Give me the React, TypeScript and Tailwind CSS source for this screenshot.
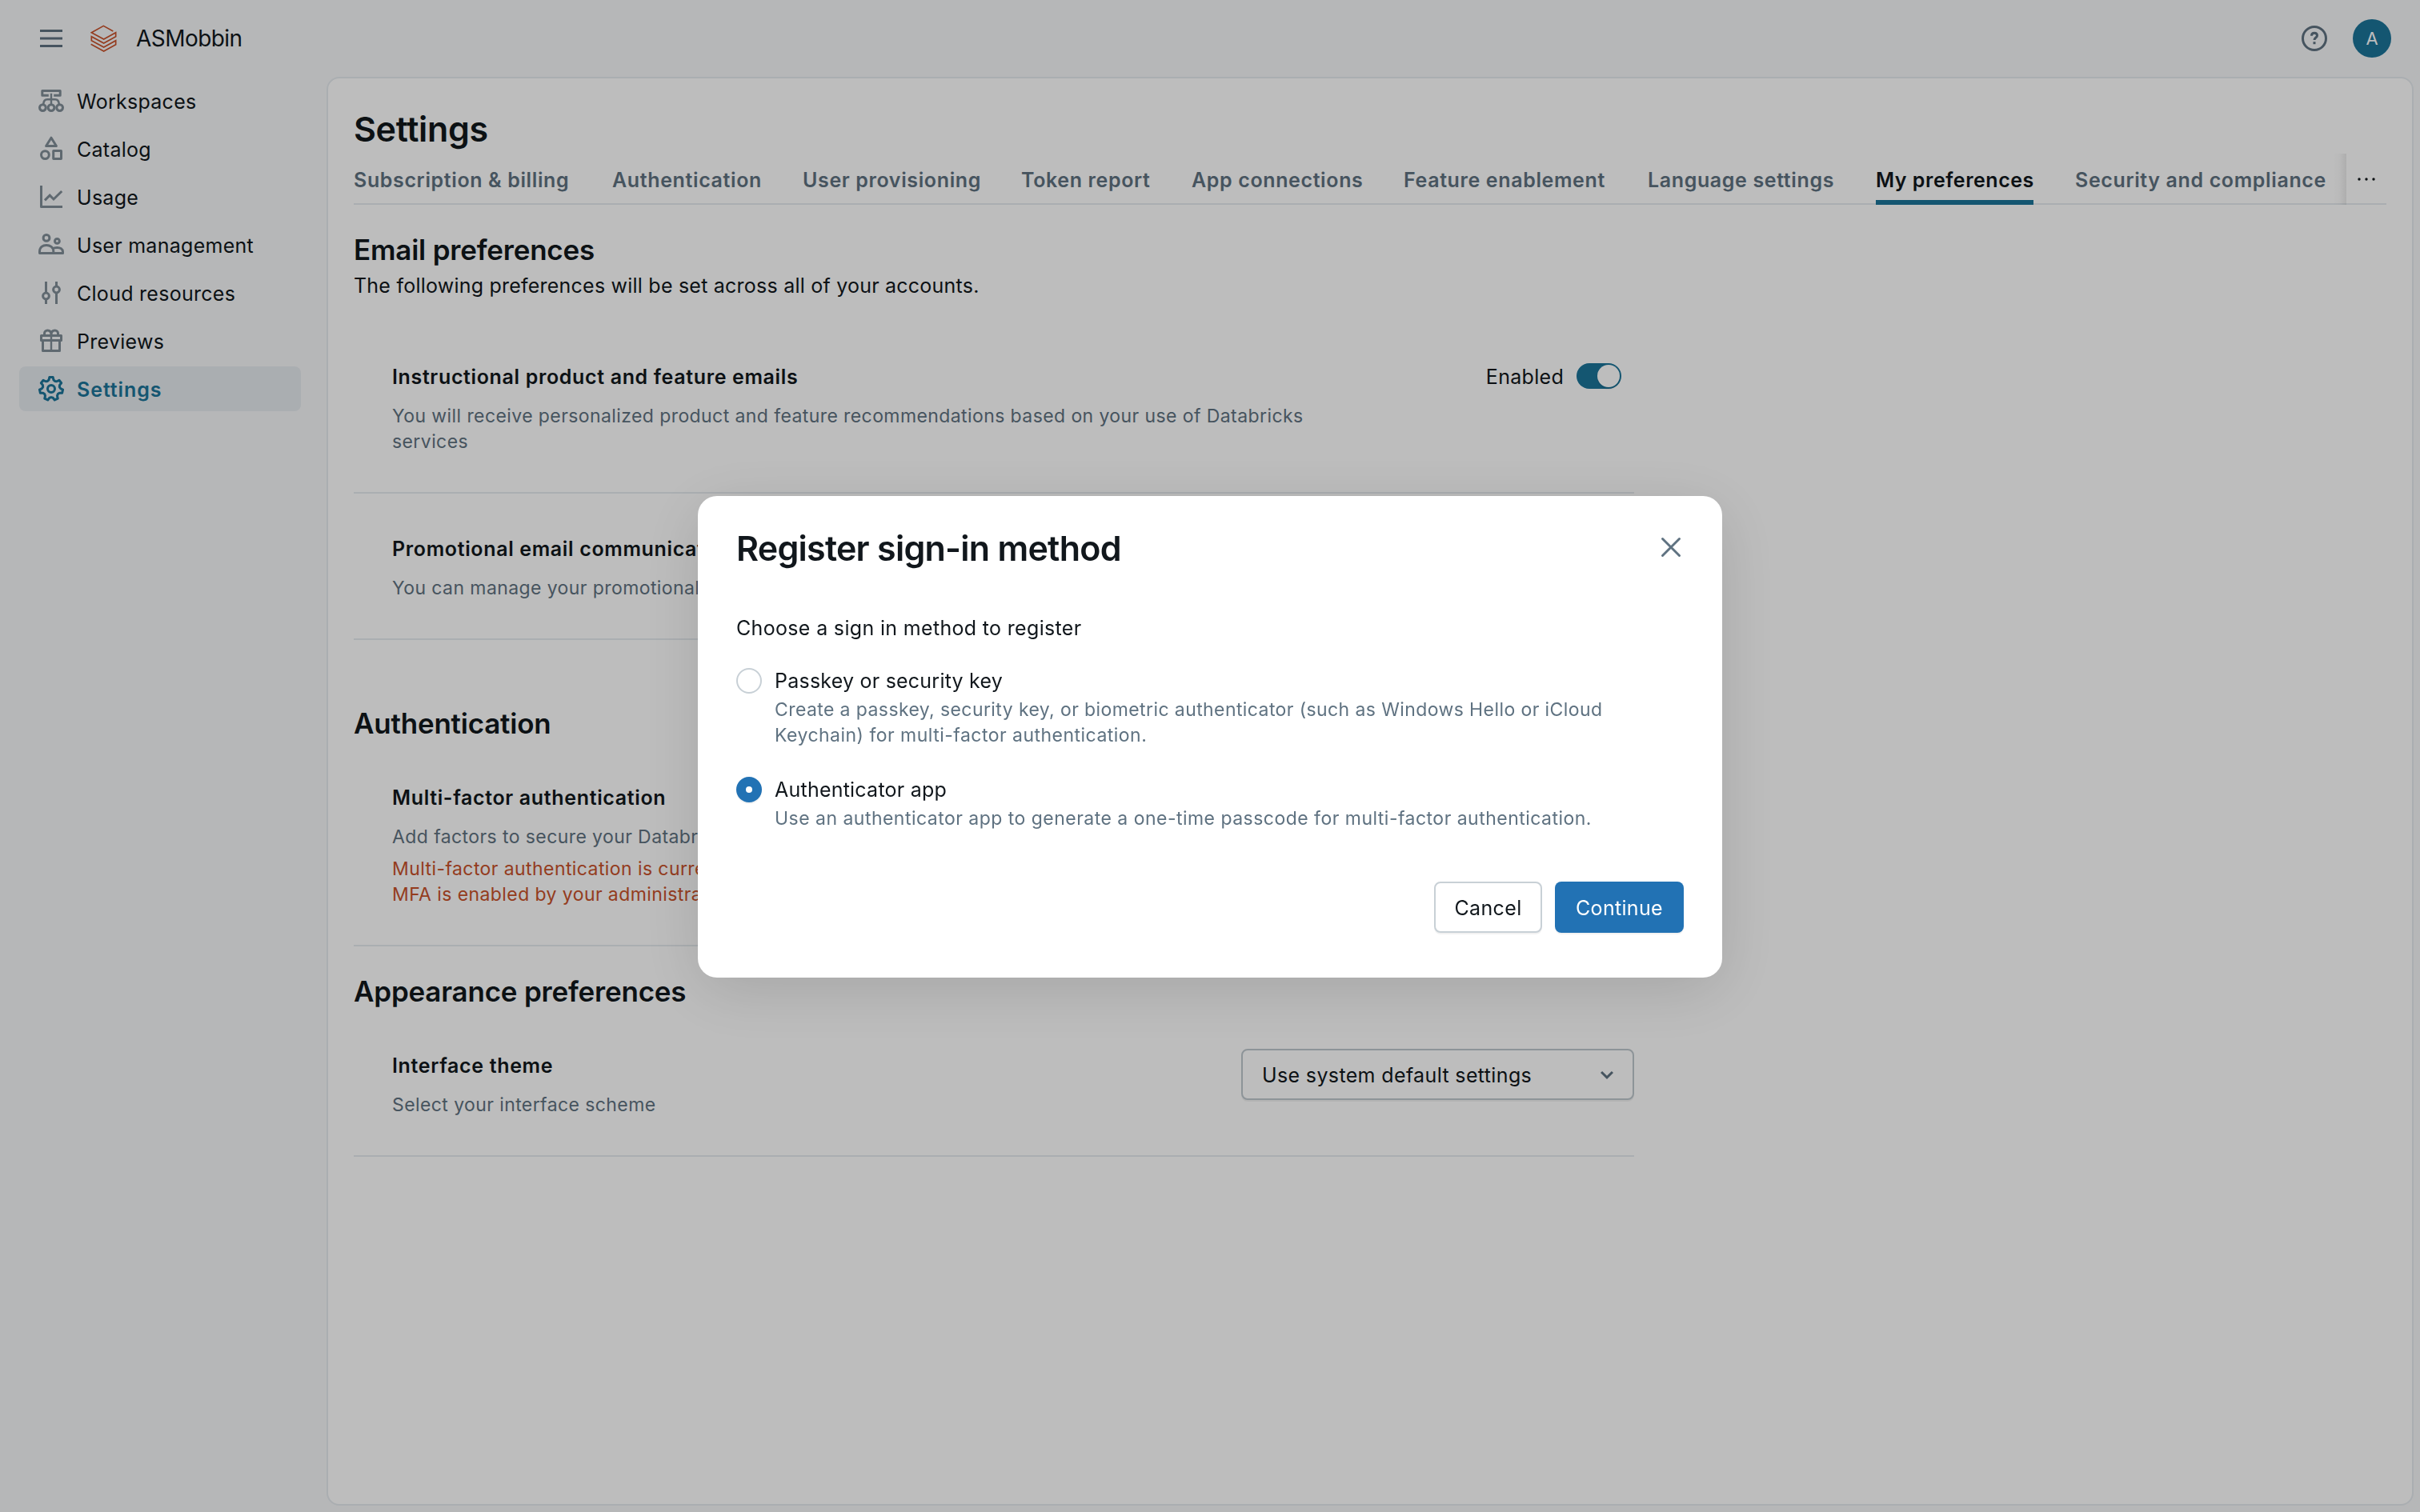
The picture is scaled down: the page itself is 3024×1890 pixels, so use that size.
import type { ReactNode } from "react";

interface IconProps {
  className?: string;
}

interface StrokeIconProps extends IconProps {
  children: ReactNode;
}

function StrokeIcon({ className = "", children }: StrokeIconProps) {
  return (
    <svg
      viewBox="0 0 16 16"
      fill="none"
      stroke="currentColor"
      strokeWidth="1.5"
      className={`size-8 shrink-0 ${className}`}
    >
      {children}
    </svg>
  );
}

function MenuIcon() {
  return (
    <StrokeIcon className="text-[#5f7281]">
      <path d="M1 3.25h14M1 8h14M1 12.75h14" />
    </StrokeIcon>
  );
}

function LogoIcon() {
  return (
    <svg
      viewBox="341 93 99 102"
      fill="none"
      stroke="#c8522b"
      strokeWidth="5"
      className="h-[34px] w-[33px] shrink-0"
    >
      <path d="M426 117 390 97l-45 25 46 25 45-25v15l-45 25-46-25v15l46 25 45-25v15l-45 25-48-26" />
    </svg>
  );
}

function WorkspacesIcon() {
  return (
    <StrokeIcon>
      <path d="M6.4 4.6H2.4V1.75h11.2V4.6h-4" strokeLinejoin="round" />
      <path d="M8 3.4v6.8" strokeWidth="1.2" />
      <path d="M3.1 10.2C3.2 8.2 4.2 7.1 5.6 7.1h4.8c1.4 0 2.4 1.1 2.5 3.1" strokeWidth="1.3" />
      <circle cx="2.7" cy="12.3" r="1.95" />
      <circle cx="8" cy="12.3" r="1.95" />
      <circle cx="13.3" cy="12.3" r="1.95" />
    </StrokeIcon>
  );
}

function CatalogIcon() {
  return (
    <StrokeIcon>
      <path d="M8 1.1 11.2 6.25H4.8z" strokeLinejoin="round" />
      <circle cx="4.2" cy="11.8" r="2.45" />
      <rect x="9.35" y="9.3" width="4.9" height="4.9" rx="0.1" strokeLinejoin="round" />
    </StrokeIcon>
  );
}

function UsageIcon() {
  return (
    <StrokeIcon>
      <path d="M1.75 1v13.25H15" strokeLinejoin="round" />
      <path d="m4 10.2 3.1-3.1 2.4 2.4 5.1-5" />
    </StrokeIcon>
  );
}

function UsersIcon() {
  return (
    <StrokeIcon>
      <circle cx="5" cy="3.7" r="1.95" />
      <circle cx="11.7" cy="5.7" r="1.45" />
      <path
        d="M.75 13.25v-1C.75 9.6 2.7 8.2 5 8.2s4.4 1.4 4.4 4v1z"
        strokeLinejoin="round"
      />
      <path
        d="M9.4 13.25h5.85v-.9c0-1.8-1.6-2.65-3.5-2.65-1.2 0-2.1.2-2.9.7"
        strokeLinejoin="round"
      />
    </StrokeIcon>
  );
}

function SlidersIcon() {
  return (
    <StrokeIcon>
      <path d="M4.75 1v7M4.75 12v3M11.25 1v3M11.25 8v7" />
      <circle cx="4.75" cy="10" r="1.95" />
      <circle cx="11.25" cy="6" r="1.95" />
    </StrokeIcon>
  );
}

function GiftIcon() {
  return (
    <StrokeIcon>
      <path d="M1.75 4.75h12.5v3H1.75zM2.75 7.75h10.5v6.5H2.75z" strokeLinejoin="round" />
      <path d="M8 4.75v9.5" strokeWidth="1.2" />
      <path d="M3.75 4.5V3.4a1.9 1.9 0 0 1 1.9-1.9C7 1.5 8 2.5 8 4.3c0-1.8 1-2.8 2.35-2.8a1.9 1.9 0 0 1 1.9 1.9v1.1" />
    </StrokeIcon>
  );
}

// seven teeth, first one pointing straight up
function gearPath(): string {
  const points: string[] = [];
  const add = (angle: number, radius: number) =>
    points.push(
      `${(8 + radius * Math.sin(angle)).toFixed(2)} ${(8 - radius * Math.cos(angle)).toFixed(2)}`
    );
  for (let i = 0; i < 7; i++) {
    const a = (i * 2 * Math.PI) / 7;
    add(a - 0.26, 5.75);
    add(a - 0.15, 7.3);
    add(a + 0.15, 7.3);
    add(a + 0.26, 5.75);
    add(a + Math.PI / 7, 5.3);
  }
  return `M${points.join("L")}Z`;
}

function GearIcon() {
  return (
    <StrokeIcon>
      <path d={gearPath()} strokeLinejoin="round" />
      <circle cx="8" cy="8" r="2.25" />
    </StrokeIcon>
  );
}

function HelpIcon() {
  return (
    <StrokeIcon className="text-[#5f7281]">
      <circle cx="8" cy="8" r="7.25" />
      <path d="M6.25 6.4c0-1.1.75-1.8 1.75-1.8s1.75.65 1.75 1.6c0 1.3-1.75 1.3-1.75 2.75" />
      <path d="M8 10.1v1.5" />
    </StrokeIcon>
  );
}

const navItems = [
  { label: "Workspaces", icon: WorkspacesIcon },
  { label: "Catalog", icon: CatalogIcon },
  { label: "Usage", icon: UsageIcon },
  { label: "User management", icon: UsersIcon },
  { label: "Cloud resources", icon: SlidersIcon },
  { label: "Previews", icon: GiftIcon },
  { label: "Settings", icon: GearIcon, active: true },
];

const tabs = [
  { label: "Subscription & billing", width: "w-[271px]" },
  { label: "Authentication", width: "w-[186px]" },
  { label: "User provisioning", width: "w-[221px]" },
  { label: "Token report", width: "w-[161px]" },
  { label: "App connections", width: "w-[213px]" },
  { label: "Feature enablement", width: "w-[253px]" },
  { label: "Language settings", width: "w-[233px]" },
  { label: "My preferences", width: "w-[197px]", active: true },
  { label: "Security and compliance", width: "w-[312px]" },
];

function Header() {
  return (
    <header className="flex h-24 shrink-0 items-center pl-12 pr-9">
      <MenuIcon />
      <div className="ml-[33px] flex items-center gap-6">
        <LogoIcon />
        <span className="text-[28px] leading-10 tracking-[-0.02em]">ASMobbin</span>
      </div>
      <div className="ml-auto flex items-center gap-8">
        <HelpIcon />
        <div className="flex size-12 items-center justify-center rounded-full bg-[#1b7499] pt-px text-[22px] text-white">
          A
        </div>
      </div>
    </header>
  );
}

function Sidebar() {
  return (
    <nav className="flex w-[408px] shrink-0 flex-col gap-1 pl-6 pr-8 pt-0.5">
      {navItems.map(({ label, icon: Icon, active }) => (
        <div
          key={label}
          className={
            active
              ? "flex h-14 items-center gap-4 rounded-lg bg-[#e6ebef] pl-6 font-semibold text-[#1b7499]"
              : "flex h-14 items-center gap-4 pl-6"
          }
        >
          <span className={active ? "text-[#1b7499]" : "text-[#808e98]"}>
            <Icon />
          </span>
          <span
            className={
              active
                ? "pt-0.5 text-[25px] leading-10 tracking-[0.037em]"
                : "pt-0.5 text-[25px] leading-10 tracking-[0.011em]"
            }
          >
            {label}
          </span>
        </div>
      ))}
    </nav>
  );
}

function TabBar() {
  return (
    <div className="mt-[3px] flex h-16 shadow-[inset_0_-2px_0_#e6ebef]">
      <div className="flex gap-[52px]">
        {tabs.map((tab) => (
          <div
            key={tab.label}
            className={
              tab.active
                ? `${tab.width} whitespace-nowrap border-b-6 border-[#1b7499] pt-[13px] text-[25px] font-semibold leading-10 tracking-[0.021em]`
                : `${tab.width} whitespace-nowrap pt-[13px] text-[25px] font-semibold leading-10 tracking-[0.025em] text-[#5f7281]`
            }
          >
            {tab.label}
          </div>
        ))}
      </div>
      <div className="ml-auto w-4 bg-linear-to-r from-transparent via-black/2 to-black/8" />
      <div className="flex w-[50px] items-center justify-center">
        <svg viewBox="0 0 22 4" fill="currentColor" className="h-1 w-[22px]">
          <circle cx="2" cy="2" r="1.7" />
          <circle cx="11" cy="2" r="1.7" />
          <circle cx="20" cy="2" r="1.7" />
        </svg>
      </div>
    </div>
  );
}

interface SectionTitleProps {
  children: ReactNode;
  className: string;
}

function SectionTitle({ children, className }: SectionTitleProps) {
  return (
    <h2 className={`text-[35px] font-semibold leading-[48px] tracking-[-0.006em] ${className}`}>
      {children}
    </h2>
  );
}

interface PreferenceRowProps {
  title: string;
  description: string;
  warning?: ReactNode;
  control?: ReactNode;
  className?: string;
}

function PreferenceRow({ title, description, warning, control, className = "" }: PreferenceRowProps) {
  return (
    <div
      className={`flex w-[1600px] items-start justify-between border-b-2 border-[#e6ebef] pb-[47px] pl-12 pt-[49px] ${className}`}
    >
      <div className="-mr-40 w-[1200px] shrink-0">
        <h3 className="text-[25px] font-semibold leading-10 tracking-[0.0258em]">{title}</h3>
        <p className="mt-[13px] max-w-[1160px] text-[23px] leading-8 tracking-[0.0178em] text-[#5f7281]">
          {description}
        </p>
        {warning && (
          <p className="mt-2 text-[23px] leading-8 tracking-[0.018em] text-[#c8522b]">{warning}</p>
        )}
      </div>
      {control}
    </div>
  );
}

function EnabledToggle() {
  return (
    <div className="mr-4 flex h-10 items-center gap-4">
      <span className="text-[25px] leading-10 tracking-[0.012em]">Enabled</span>
      <div className="mb-0.5 flex h-8 w-14 items-center justify-end rounded-full bg-[#1b7499] pr-0.5">
        <div className="size-7 rounded-full bg-white shadow-[0_3px_1px_rgba(0,0,0,0.06)]" />
      </div>
    </div>
  );
}

function ThemeSelect() {
  return (
    <div className="-mb-4 -mt-px flex h-16 w-[491px] items-center justify-between rounded-lg border-2 border-[#bfc8ce] bg-white pl-6 pr-4 shadow-[0_2px_0_rgba(0,0,0,0.05)]">
      <span className="pt-0.5 text-[25px] leading-10 tracking-[0.0145em]">
        Use system default settings
      </span>
      <svg viewBox="0 0 16 16" className="size-8 fill-[#5f7281]">
        <path d="M8 8.917 10.947 6 12 7.042 8 11 4 7.042 5.053 6z" />
      </svg>
    </div>
  );
}

function SettingsPanel() {
  return (
    <main className="mb-2 mr-2 flex-1 rounded-2xl border-2 border-[#e6ebef] bg-white px-8 pt-[35px]">
      <h1 className="text-[43px] font-semibold leading-14 tracking-[-0.008em]">Settings</h1>
      <TabBar />
      <SectionTitle className="mt-8">Email preferences</SectionTitle>
      <p className="mt-px text-[25px] leading-10 tracking-[0.009em]">
        The following preferences will be set across all of your accounts.
      </p>
      <PreferenceRow
        className="mt-[25px]"
        title="Instructional product and feature emails"
        description="You will receive personalized product and feature recommendations based on your use of Databricks services"
        control={<EnabledToggle />}
      />
      <PreferenceRow
        title="Promotional email communications"
        description="You can manage your promotional email preferences here"
      />
      <SectionTitle className="mt-20">Authentication</SectionTitle>
      <PreferenceRow
        title="Multi-factor authentication"
        description="Add factors to secure your Databricks account"
        warning={
          <>
            Multi-factor authentication is currently optional
            <br />
            MFA is enabled by your administrator
          </>
        }
      />
      <SectionTitle className="mt-8">Appearance preferences</SectionTitle>
      <PreferenceRow
        title="Interface theme"
        description="Select your interface scheme"
        control={<ThemeSelect />}
      />
    </main>
  );
}

interface RadioOptionProps {
  label: string;
  description: ReactNode;
  checked?: boolean;
  className: string;
}

function RadioOption({ label, description, checked, className }: RadioOptionProps) {
  return (
    <div className={`flex items-start gap-4 ${className}`}>
      {checked ? (
        <div className="mt-1 flex size-8 shrink-0 items-center justify-center rounded-full bg-[#2272b4] shadow-[0_2px_0_rgba(0,0,0,0.05)]">
          <div className="size-2 rounded-full bg-white" />
        </div>
      ) : (
        <div className="mt-1 size-8 shrink-0 rounded-full border-2 border-[#c8d0d6]" />
      )}
      <div className="max-w-[1110px]">
        <div className="text-[25px] leading-10 tracking-[0.009em]">{label}</div>
        <p className="text-[23px] leading-8 tracking-[0.0207em] text-[#5f7281]">{description}</p>
      </div>
    </div>
  );
}

function RegisterDialog() {
  return (
    <div
      role="dialog"
      className="flex h-[602px] w-[1280px] flex-col rounded-3xl bg-white px-12 pt-[37px] shadow-[0_16px_80px_rgba(0,0,0,0.13)]"
    >
      <div className="flex items-start justify-between">
        <h2 className="text-[43px] font-semibold leading-14 tracking-[-0.0175em]">
          Register sign-in method
        </h2>
        <svg
          viewBox="0 0 32 32"
          fill="none"
          stroke="#5f7281"
          strokeWidth="3"
          strokeLinecap="round"
          className="mt-[11px] size-8"
        >
          <path d="M5.5 5.5l21 21M26.5 5.5l-21 21" />
        </svg>
      </div>
      <p className="mt-[52px] text-[25px] leading-10 tracking-[0.0132em]">
        Choose a sign in method to register
      </p>
      <RadioOption
        className="mt-[26px]"
        label="Passkey or security key"
        description={
          <>
            <span className="tracking-[0.0175em]">
              Create a passkey, security key, or biometric authenticator (such as Windows Hello or iCloud
            </span>{" "}
            Keychain) for multi-factor authentication.
          </>
        }
      />
      <RadioOption
        checked
        className="mt-8"
        label="Authenticator app"
        description="Use an authenticator app to generate a one-time passcode for multi-factor authentication."
      />
      <div className="mt-[63px] flex justify-end gap-4">
        <button className="h-16 w-[135px] rounded-lg border-2 border-[#c8d0d6] bg-white pt-0.5 text-[25px] leading-10 tracking-[0.015em] shadow-[0_2px_0_rgba(0,0,0,0.05)]">
          Cancel
        </button>
        <button className="h-16 w-[161px] rounded-lg bg-[#2272b4] pt-0.5 text-[25px] leading-10 tracking-[0.0125em] text-white shadow-[0_2px_0_rgba(0,0,0,0.05)]">
          Continue
        </button>
      </div>
    </div>
  );
}

export default function App() {
  return (
    <div className="flex h-screen flex-col overflow-hidden bg-[#f6f7f9] font-['Inter','Noto_Sans',sans-serif] text-[#11171c]">
      <Header />
      <div className="flex min-h-0 flex-1">
        <Sidebar />
        <SettingsPanel />
      </div>
      <div className="fixed inset-0 flex items-start justify-center bg-black/26 pt-[620px]">
        <RegisterDialog />
      </div>
    </div>
  );
}
